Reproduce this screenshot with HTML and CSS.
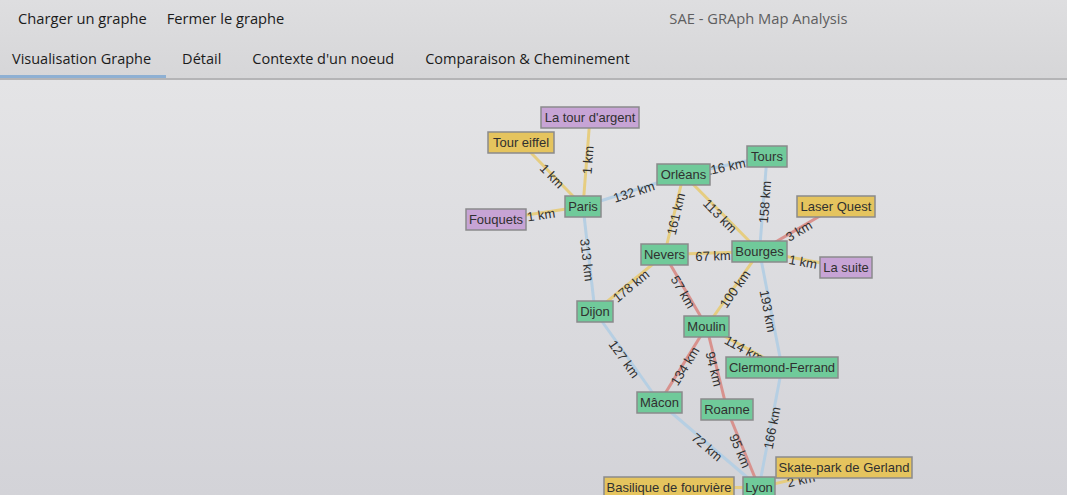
FILE: index.html
```html
<!DOCTYPE html>
<html lang="fr">
<head>
<meta charset="utf-8">
<title>SAE - GRAph Map Analysis</title>
<link rel="stylesheet" href="styles.css">
</head>
<body>
<div class="app">
  <header class="header">
    <div class="menubar">
      <span class="menu-item">Charger un graphe</span>
      <span class="menu-item">Fermer le graphe</span>
      <span class="app-title">SAE - GRAph Map Analysis</span>
    </div>
    <nav class="tabs">
      <span class="tab active">Visualisation Graphe</span>
      <span class="tab">Détail</span>
      <span class="tab">Contexte d'un noeud</span>
      <span class="tab">Comparaison &amp; Cheminement</span>
    </nav>
  </header>
  <main class="canvas">
    <svg class="graph" width="1067" height="415" viewBox="0 80 1067 415" xmlns="http://www.w3.org/2000/svg">
      <g class="edges">
        <line class="e-y" x1="521" y1="142.5" x2="583" y2="206.5"/>
        <line class="e-y" x1="590" y1="117.5" x2="583" y2="206.5"/>
        <line class="e-y" x1="496" y1="219.5" x2="583" y2="206.5"/>
        <line class="e-b" x1="583" y1="206.5" x2="683.5" y2="174.5"/>
        <line class="e-b" x1="583" y1="206.5" x2="595" y2="311.5"/>
        <line class="e-b" x1="683.5" y1="174.5" x2="767" y2="156.5"/>
        <line class="e-y" x1="683.5" y1="174.5" x2="664.5" y2="254.5"/>
        <line class="e-y" x1="683.5" y1="174.5" x2="759.5" y2="251.5"/>
        <line class="e-b" x1="767" y1="156.5" x2="759.5" y2="251.5"/>
        <line class="e-r" x1="759.5" y1="251.5" x2="836" y2="206.5"/>
        <line class="e-y" x1="759.5" y1="251.5" x2="846" y2="267.5"/>
        <line class="e-y" x1="664.5" y1="254.5" x2="759.5" y2="251.5"/>
        <line class="e-y" x1="664.5" y1="254.5" x2="595" y2="311.5"/>
        <line class="e-r" x1="664.5" y1="254.5" x2="706.5" y2="326.5"/>
        <line class="e-y" x1="759.5" y1="251.5" x2="706.5" y2="326.5"/>
        <line class="e-b" x1="759.5" y1="251.5" x2="782" y2="367.5"/>
        <line class="e-y" x1="706.5" y1="326.5" x2="782" y2="367.5"/>
        <line class="e-r" x1="706.5" y1="326.5" x2="659.5" y2="402.5"/>
        <line class="e-r" x1="706.5" y1="326.5" x2="727" y2="409.5"/>
        <line class="e-b" x1="595" y1="311.5" x2="659.5" y2="402.5"/>
        <line class="e-b" x1="659.5" y1="402.5" x2="759" y2="487.5"/>
        <line class="e-r" x1="727" y1="409.5" x2="759" y2="487.5"/>
        <line class="e-b" x1="782" y1="367.5" x2="759" y2="487.5"/>
        <line class="e-y" x1="759" y1="487.5" x2="844" y2="467.5"/>
        <line class="e-y" x1="759" y1="487.5" x2="669" y2="487.5"/>
      </g>
      <g class="labels">
        <text transform="translate(552 176) rotate(45.9)">1 km</text>
        <text transform="translate(588 160) rotate(-85.5)">1 km</text>
        <text transform="translate(541 215) rotate(-8.5)">1 km</text>
        <text transform="translate(634 192) rotate(-17.7)">132 km</text>
        <text transform="translate(587 260) rotate(83.5)">313 km</text>
        <text transform="translate(725 167) rotate(-12.2)">116 km</text>
        <text transform="translate(676 214) rotate(-76.6)">161 km</text>
        <text transform="translate(720 216) rotate(45.4)">113 km</text>
        <text transform="translate(765 202) rotate(-85.5)">158 km</text>
        <text transform="translate(799 231) rotate(-30.5)">3 km</text>
        <text transform="translate(803 262) rotate(10.5)">1 km</text>
        <text transform="translate(713 256) rotate(-1.8)">67 km</text>
        <text transform="translate(631 286) rotate(-39.4)">178 km</text>
        <text transform="translate(683 292) rotate(59.7)">57 km</text>
        <text transform="translate(735 289) rotate(-54.8)">100 km</text>
        <text transform="translate(768 311) rotate(79)">193 km</text>
        <text transform="translate(744 349) rotate(28.5)">114 km</text>
        <text transform="translate(685 366) rotate(-58.3)">134 km</text>
        <text transform="translate(714 369) rotate(76.1)">94 km</text>
        <text transform="translate(624 359) rotate(54.7)">127 km</text>
        <text transform="translate(707 447) rotate(40.5)">72 km</text>
        <text transform="translate(740 451) rotate(67.7)">95 km</text>
        <text transform="translate(772 428) rotate(-79.1)">166 km</text>
        <text transform="translate(801 480) rotate(-13.2)">2 km</text>
      </g>
      <g class="nodes">
        <rect class="n-p" x="541" y="107" width="98" height="21"/><text x="590" y="117.5">La tour d'argent</text>
        <rect class="n-y" x="488" y="132" width="66" height="21"/><text x="521" y="142.5">Tour eiffel</text>
        <rect class="n-g" x="565" y="196" width="36" height="21"/><text x="583" y="206.5">Paris</text>
        <rect class="n-p" x="466" y="209" width="60" height="21"/><text x="496" y="219.5">Fouquets</text>
        <rect class="n-g" x="657" y="164" width="53" height="21"/><text x="683.5" y="174.5">Orléans</text>
        <rect class="n-g" x="747" y="146" width="40" height="21"/><text x="767" y="156.5">Tours</text>
        <rect class="n-y" x="797" y="196" width="78" height="21"/><text x="836" y="206.5">Laser Quest</text>
        <rect class="n-g" x="732" y="241" width="55" height="21"/><text x="759.5" y="251.5">Bourges</text>
        <rect class="n-g" x="641" y="244" width="47" height="21"/><text x="664.5" y="254.5">Nevers</text>
        <rect class="n-p" x="820" y="257" width="52" height="21"/><text x="846" y="267.5">La suite</text>
        <rect class="n-g" x="577" y="301" width="36" height="21"/><text x="595" y="311.5">Dijon</text>
        <rect class="n-g" x="684" y="316" width="45" height="21"/><text x="706.5" y="326.5">Moulin</text>
        <rect class="n-g" x="726" y="357" width="112" height="21"/><text x="782" y="367.5">Clermond-Ferrand</text>
        <rect class="n-g" x="637" y="392" width="45" height="21"/><text x="659.5" y="402.5">Mâcon</text>
        <rect class="n-g" x="701" y="399" width="52" height="21"/><text x="727" y="409.5">Roanne</text>
        <rect class="n-y" x="776" y="457" width="136" height="21"/><text x="844" y="467.5">Skate-park de Gerland</text>
        <rect class="n-y" x="604" y="477" width="130" height="21"/><text x="669" y="487.5">Basilique de fourvière</text>
        <rect class="n-g" x="743" y="477" width="32" height="21"/><text x="759" y="487.5">Lyon</text>
      </g>
    </svg>
  </main>
</div>
</body>
</html>
```

FILE: styles.css
```css
html, body {
  margin: 0;
  padding: 0;
}

body {
  width: 1067px;
  height: 495px;
  overflow: hidden;
  font-family: "Open Sans", "Noto Sans", "Liberation Sans", sans-serif;
  color: #1b1b1b;
}

.app {
  display: flex;
  flex-direction: column;
  height: 495px;
}

.header {
  background: linear-gradient(#dedee0, #d6d6d8);
  border-bottom: 2px solid #b4b4b6;
}

.menubar {
  display: flex;
  align-items: center;
  height: 36px;
  padding-left: 8px;
  font-size: 14.7px;
}

.menu-item {
  padding: 0 10px;
}

.app-title {
  margin-left: 375px;
  color: #5e5e60;
}

.tabs {
  display: flex;
  gap: 4px;
  height: 42px;
  font-size: 14.5px;
}

.tab {
  display: flex;
  align-items: center;
  padding: 5px 15px 0 12px;
  border-bottom: 3px solid transparent;
}

.tab.active {
  border-bottom-color: #8eb0d3;
}

.canvas {
  flex: 1;
  background: linear-gradient(#e4e4e6, #d3d3d8);
  overflow: hidden;
}

.graph {
  display: block;
}

.edges line {
  stroke-width: 3;
}

.e-b { stroke: #b6cfe3; }
.e-y { stroke: #e6cd80; }
.e-r { stroke: #d8928e; }

.graph text {
  font-family: "Liberation Sans", Arial, sans-serif;
  font-size: 13px;
  fill: #303030;
  text-anchor: middle;
  dominant-baseline: central;
}

.nodes rect {
  stroke: #8a8a8c;
  stroke-width: 1.5;
}

.n-g { fill: #70ca9a; }
.n-y { fill: #e5c45e; }
.n-p { fill: #c7a4d5; }
```
